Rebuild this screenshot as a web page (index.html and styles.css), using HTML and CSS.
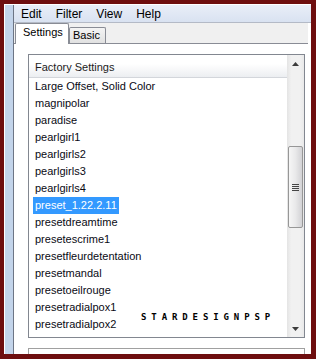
FILE: index.html
```html
<!doctype html>
<html>
<head>
<meta charset="utf-8">
<title>Presets</title>
<link rel="stylesheet" href="styles.css">
</head>

<body>
<div class="window">
	<div class="frame-left"></div>
	<div class="client">
		<div class="menubar">
			<span>Edit</span><span>Filter</span><span>View</span><span>Help</span>
		</div>
		<div class="tabs">
			<div class="tab current">Settings</div>
			<div class="tab">Basic</div>
		</div>
		<div class="page">
			<div class="listbox">
				<div class="list">
					<div class="group">Factory Settings</div>
					<div class="item"><span>Large Offset, Solid Color</span></div>
					<div class="item"><span>magnipolar</span></div>
					<div class="item"><span>paradise</span></div>
					<div class="item"><span>pearlgirl1</span></div>
					<div class="item"><span>pearlgirls2</span></div>
					<div class="item"><span>pearlgirls3</span></div>
					<div class="item"><span>pearlgirls4</span></div>
					<div class="item sel"><span>preset_1.22.2.11</span></div>
					<div class="item"><span>presetdreamtime</span></div>
					<div class="item"><span>presetescrime1</span></div>
					<div class="item"><span>presetfleurdetentation</span></div>
					<div class="item"><span>presetmandal</span></div>
					<div class="item"><span>presetoeilrouge</span></div>
					<div class="item"><span>presetradialpox1</span></div>
					<div class="item"><span>presetradialpox2</span></div>
				</div>
				<div class="scrollbar">
					<div class="sb-btn">
						<svg width="7" height="4" viewBox="0 0 7 4"><polygon points="0,4 3.5,0 7,4" fill="#3c3c3c"/></svg>
					</div>
					<div class="sb-track">
						<div class="sb-thumb"><div class="grip"></div></div>
					</div>
					<div class="sb-btn">
						<svg width="7" height="4" viewBox="0 0 7 4"><polygon points="0,0 7,0 3.5,4" fill="#3c3c3c"/></svg>
					</div>
				</div>
				<div class="mark">STARDESIGNPSP</div>
			</div>
			<div class="lowerbox"></div>
		</div>
	</div>
</div>
</body>
</html>
```

FILE: styles.css
```css
*{
	box-sizing: border-box;
}
body{
	margin: 0;
	width: 316px;
	height: 359px;
	overflow: hidden;
	background: #6e0e0f;
	font-family: "Liberation Sans", Arial, sans-serif;
	color: #000;
}
.window{
	display: flex;
	margin: 4px 5px 0 4px;
	height: 350px;
	border-left: 1px solid #fff;
	border-top: 1px solid #fff;
	overflow: hidden;
}
.frame-left{
	width: 9px;
	background: #c3d4ea;
	border-right: 1px solid #6d7585;
}
.client{
	flex: 1;
	display: flex;
	flex-direction: column;
	background: #fff;
}
.menubar{
	height: 18px;
	padding-top: 2px;
	line-height: 15px;
	font-size: 12px;
	background: linear-gradient(#e9eef8, #d9e2f1);
	border-bottom: 1px solid #b4bac6;
	white-space: nowrap;
}
.menubar span{
	padding: 0 7px;
}
.tabs{
	display: flex;
	align-items: flex-end;
	height: 25px;
	margin-right: 3px;
	padding-left: 1px;
	background: #f0f0f0;
	border-bottom: 1px solid #898c95;
}
.tab{
	width: 37px;
	height: 16px;
	padding-left: 3px;
	line-height: 14px;
	font-size: 11px;
	border: 1px solid #898c95;
	border-bottom: none;
	border-radius: 2px 2px 0 0;
	background: linear-gradient(#f4f4f4, #e1e1e1);
}
.tab.current{
	position: relative;
	width: 54px;
	height: 21px;
	margin-bottom: -1px;
	padding: 1px 0 0 7px;
	background: #fff;
}
.page{
	flex: 1;
	padding: 10px 0 0 14px;
}
.listbox{
	position: relative;
	display: flex;
	width: 277px;
	height: 284px;
	border: 1px solid #828790;
}
.list{
	flex: 1;
	overflow: hidden;
	font-size: 11px;
	color: #0a0a14;
}
.group{
	height: 23px;
	padding: 3px 0 0 6px;
	line-height: 19px;
	color: #1c1c1c;
	background: linear-gradient(#fff 0, #fff 40%, #eceef1);
	border-bottom: 1px solid #d3d6db;
}
.item{
	height: 17px;
	line-height: 17px;
	padding-left: 4px;
	white-space: nowrap;
}
.item span{
	display: inline-block;
	padding: 0 2px;
}
.item.sel span{
	background: #3399ff;
	color: #fff;
}
.scrollbar{
	width: 17px;
	display: flex;
	flex-direction: column;
	background: linear-gradient(to right, #e4e4e4, #f1f1f1 25%, #f1f1f1 75%, #e9e9e9);
}
.sb-btn{
	height: 17px;
	display: flex;
	align-items: center;
	justify-content: center;
}
.sb-track{
	flex: 1;
}
.sb-thumb{
	display: flex;
	align-items: center;
	justify-content: center;
	height: 82px;
	margin: 74px 1px 0 1px;
	border: 1px solid #979797;
	border-radius: 2px;
	background: linear-gradient(to right, #f6f6f6, #e9e9ea 50%, #d2d2d5);
}
.grip{
	width: 7px;
	height: 7px;
	background: repeating-linear-gradient(#454545 0, #454545 1px, transparent 1px, transparent 2px);
}
.mark{
	position: absolute;
	left: 112px;
	top: 258px;
	font-family: "DejaVu Sans Mono", monospace;
	font-size: 9px;
	font-weight: bold;
	line-height: 9px;
	letter-spacing: 4.9px;
	color: #000;
}
.lowerbox{
	width: 277px;
	height: 20px;
	margin-top: 10px;
	border: 1px solid #a0a0a0;
}
```
